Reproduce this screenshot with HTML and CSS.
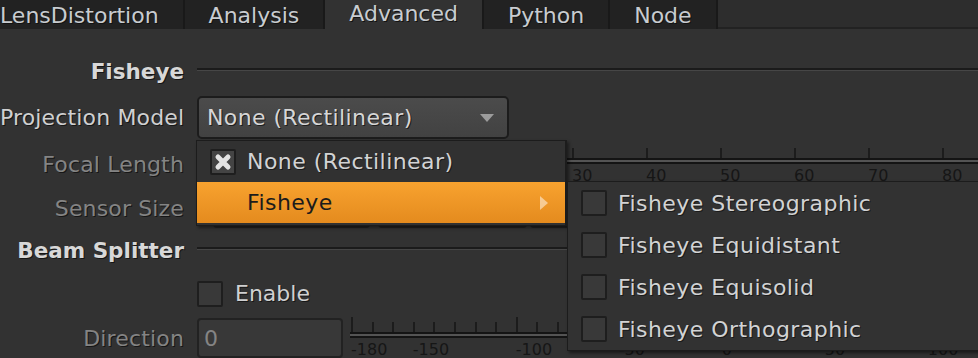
FILE: index.html
```html
<!DOCTYPE html>
<html lang="en">

<head>
    <meta charset="UTF-8">
    <meta name="viewport" content="width=device-width, initial-scale=1.0">
    <title>LensDistortion - Advanced</title>
    <link rel="stylesheet" href="styles.css">
</head>

<body>

    <div class="tabs">
        <div class="tab">LensDistortion</div>
        <div class="tab">Analysis</div>
        <div class="tab active">Advanced</div>
        <div class="tab">Python</div>
        <div class="tab">Node</div>
        <div class="tabs-rest"></div>
    </div>

    <div class="panel">
        <div class="row heading">
            <div class="label">Fisheye</div>
            <div class="rule"></div>
        </div>

        <div class="row row-proj">
            <div class="label">Projection Model</div>
            <div class="dropdown">
                <span>None (Rectilinear)</span>
                <span class="caret"></span>
            </div>
        </div>

        <div class="row row-focal">
            <div class="label dim">Focal Length</div>
            <div class="field"></div>
            <div class="slider" id="focalSlider"><div class="rail"></div></div>
        </div>

        <div class="row row-sensor">
            <div class="label dim">Sensor Size</div>
            <div class="field field-w"></div>
            <div class="field field-h"></div>
            <div class="field field-btn"></div>
        </div>

        <div class="row heading heading-beam">
            <div class="label">Beam Splitter</div>
            <div class="rule"></div>
        </div>

        <div class="row row-enable">
            <div class="label"></div>
            <span class="checkbox"></span>
            <span class="check-text">Enable</span>
        </div>

        <div class="row row-direction">
            <div class="label dim">Direction</div>
            <div class="field"><span class="field-value">0</span></div>
            <div class="slider" id="directionSlider"><div class="rail"></div></div>
        </div>
    </div>

    <!-- open dropdown menu of Projection Model -->
    <div class="popup">
        <div class="popup-item">
            <span class="checkbox checked">
                <svg width="22" height="22" viewBox="0 0 22 22">
                    <path d="M6 6 L16 16 M16 6 L6 16" stroke="#e4e4e4" stroke-width="5" stroke-linecap="round" fill="none" />
                </svg>
            </span>
            <span class="item-text">None (Rectilinear)</span>
        </div>
        <div class="popup-item active">
            <span class="checkbox-space"></span>
            <span class="item-text">Fisheye</span>
            <span class="sub-arrow"></span>

            <div class="submenu">
                <div class="popup-item"><span class="checkbox"></span><span class="item-text">Fisheye Stereographic</span></div>
                <div class="popup-item"><span class="checkbox"></span><span class="item-text">Fisheye Equidistant</span></div>
                <div class="popup-item"><span class="checkbox"></span><span class="item-text">Fisheye Equisolid</span></div>
                <div class="popup-item"><span class="checkbox"></span><span class="item-text">Fisheye Orthographic</span></div>
            </div>
        </div>
    </div>

    <script>
        // Build the ticks and numbers of a slider
        function buildSlider(id, from, to, step, origin, scale, labels, tall) {
            const slider = document.getElementById(id);
            for (let v = from; v <= to; v += step) {
                const x = origin + (v - from) * scale;
                const tick = document.createElement('div');
                tick.className = tall.includes(v) ? 'tick tall' : 'tick';
                tick.style.left = x + 'px';
                slider.appendChild(tick);
                if (labels.includes(v)) {
                    const label = document.createElement('span');
                    label.className = 'tick-label';
                    label.style.left = x + 'px';
                    label.textContent = v;
                    slider.appendChild(label);
                }
            }
        }

        buildSlider('focalSlider', 0, 90, 10, 0, 7.4,
            [30, 40, 50, 60, 70, 80], []);
        buildSlider('directionSlider', -180, 180, 10, 1, 2.06,
            [-180, -150, -100, -50, 0, 50, 100], [-180, -100, 0, 100, 180]);
    </script>

</body>

</html>
```

FILE: styles.css
```css
* {
    box-sizing: border-box;
}

body {
    margin: 0;
    width: 978px;
    height: 358px;
    overflow: hidden;
    position: relative;
    background-color: #323232;
    font-family: "DejaVu Sans", Verdana, sans-serif;
    font-size: 22px;
    color: #cfd0d1;
}

/* tab bar */

.tabs {
    display: flex;
    height: 29px;
}

.tab {
    display: flex;
    align-items: center;
    padding: 1px 24px 0;
    background-color: #222222;
    border-right: 2px solid #191919;
    color: #c8ccd0;
    white-space: nowrap;
    text-shadow: 1px 1px 0 #121212;
}

.tab:first-child {
    padding-left: 0;
}

.tab.active {
    background-color: #323232;
    padding-top: 0;
    padding-bottom: 3px;
}

.tabs-rest {
    flex: 1;
    background-color: #2d2d2d;
    border-bottom: 2px solid #222222;
}

/* knob rows */

.panel {
    padding-top: 21px;
}

.row {
    display: flex;
    align-items: center;
}

.label {
    flex: none;
    width: 184px;
    margin-right: 13px;
    text-align: right;
    white-space: nowrap;
    letter-spacing: 0.15px;
    text-shadow: 1px 1px 0 #161616;
}

.label.dim {
    color: #848484;
}

.heading {
    height: 42px;
}

.heading .label {
    font-weight: bold;
    font-size: 21.5px;
    letter-spacing: 0;
    color: #d8d8d8;
}

.heading-beam {
    height: 38px;
}

.rule {
    flex: 1;
    height: 3px;
    margin-bottom: 3px;
    border-top: 2px solid #1b1b1b;
    border-bottom: 1px solid #464646;
}

.row-proj {
    height: 51px;
}

.row-focal {
    height: 42px;
}

.row-sensor {
    height: 46px;
}

.row-enable {
    height: 49px;
}

.row-direction {
    height: 40px;
}

.dropdown {
    display: flex;
    align-items: center;
    width: 312px;
    height: 43px;
    padding-left: 8px;
    border: 2px solid #1c1c1c;
    border-radius: 5px;
    background: linear-gradient(#4b4b4b, #424242);
    color: #d6d6d6;
    letter-spacing: 0.4px;
    text-shadow: 1px 1px 0 #1e1e1e;
}

.caret {
    margin-left: auto;
    margin-right: 13px;
    width: 0;
    height: 0;
    border-left: 7.5px solid transparent;
    border-right: 7.5px solid transparent;
    border-top: 8px solid #9c9c9c;
}

.field {
    flex: none;
    display: flex;
    align-items: center;
    width: 146px;
    height: 40px;
    padding-left: 5px;
    border: 2px solid #222222;
    border-radius: 4px;
    background-color: #383838;
}

.field-value {
    color: #848484;
}

.field-w {
    width: 157px;
    margin-left: 16px;
}

.field-h {
    width: 149px;
    margin-left: 8px;
}

.field-btn {
    width: 60px;
    margin-left: 3px;
}

.checkbox {
    flex: none;
    display: flex;
    align-items: center;
    justify-content: center;
    width: 26px;
    height: 26px;
    border: 2px solid #1e1e1e;
    border-radius: 2px;
    background-color: #393939;
}

.checkbox.checked {
    background-color: #444444;
}

.check-text {
    margin-left: 12px;
    text-shadow: 1px 1px 0 #161616;
}

/* sliders */

.slider {
    position: relative;
    flex: 1;
    height: 40px;
    margin-left: 7px;
}

.rail {
    position: absolute;
    left: 0;
    right: 0;
    top: 14px;
    height: 6px;
    border-top: 2px solid #141414;
    border-bottom: 2px solid #141414;
    background-color: #545454;
}

.tick {
    position: absolute;
    top: 4px;
    width: 2px;
    height: 10px;
    background-color: #1c1c1c;
}

.tick.tall {
    top: -1px;
    height: 15px;
}

.tick-label {
    position: absolute;
    top: 22px;
    font-size: 16px;
    color: #161616;
    white-space: nowrap;
}

/* popup menu */

.popup {
    position: absolute;
    left: 196px;
    top: 140px;
    width: 371px;
    padding-bottom: 2px;
    border: 1px solid #1c1c1c;
    border-right-width: 2px;
    background-color: #313131;
    box-shadow: 2px 2px 3px rgba(0, 0, 0, 0.45);
}

.popup-item {
    position: relative;
    display: flex;
    align-items: center;
    height: 41px;
    padding-left: 13px;
    white-space: nowrap;
}

.item-text {
    margin-left: 11px;
    color: #d2d3d4;
    letter-spacing: 0.45px;
    text-shadow: 1px 1px 0 #1a1a1a;
}

.checkbox-space {
    width: 26px;
}

.popup-item.active {
    background: linear-gradient(#f8a22f, #e48b1e);
}

.popup-item.active > .item-text {
    color: #1b1b1b;
    text-shadow: none;
}

.sub-arrow {
    margin-left: auto;
    margin-right: 17px;
    width: 0;
    height: 0;
    border-top: 7px solid transparent;
    border-bottom: 7px solid transparent;
    border-left: 8px solid rgba(255, 255, 255, 0.5);
}

.submenu {
    position: absolute;
    left: calc(100% + 2px);
    top: -1px;
    width: 430px;
    border: 1px solid #1c1c1c;
    background-color: #323232;
    box-shadow: 2px 2px 3px rgba(0, 0, 0, 0.5);
}

.submenu .popup-item {
    height: 42px;
}
```
